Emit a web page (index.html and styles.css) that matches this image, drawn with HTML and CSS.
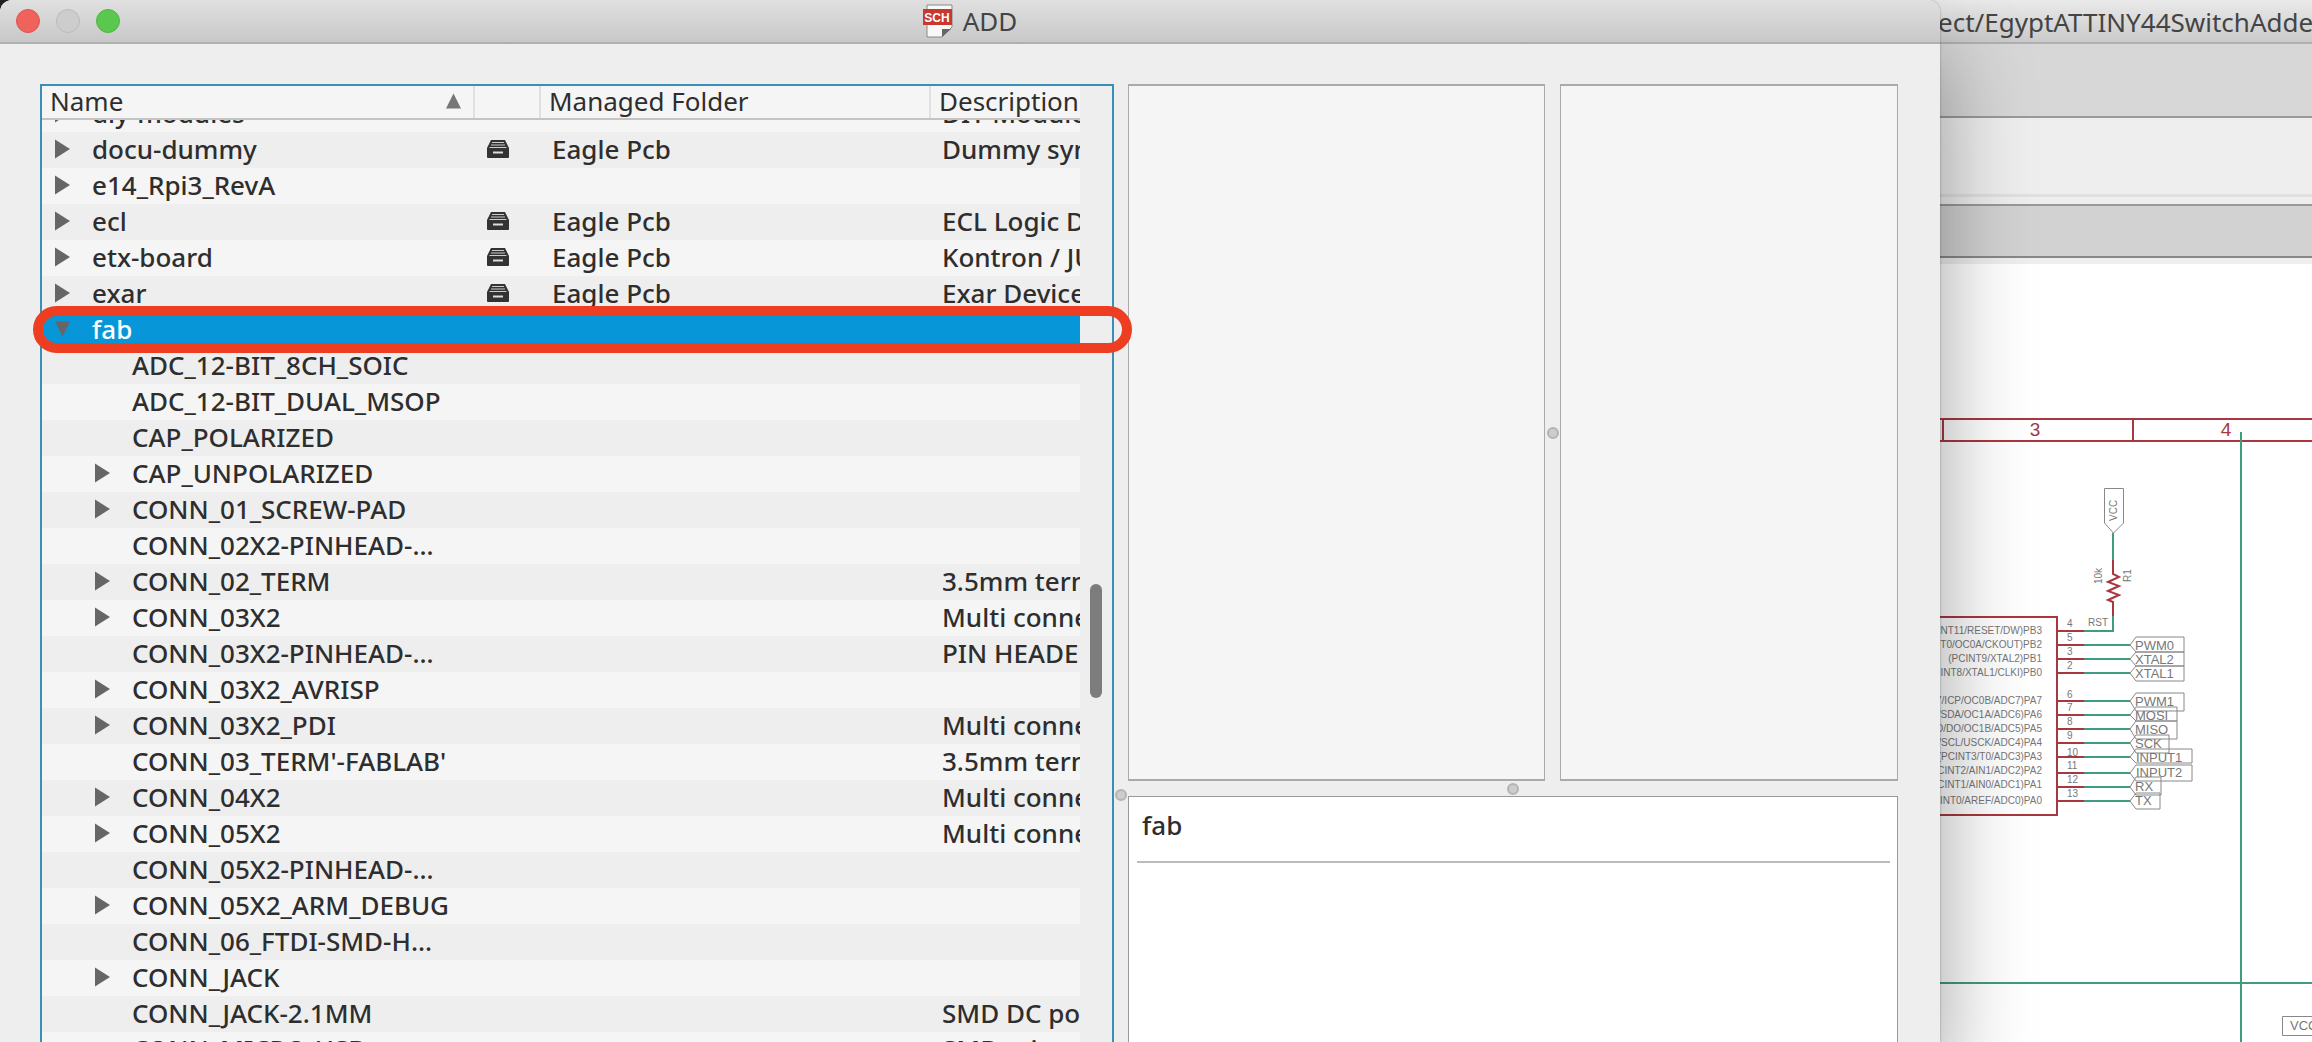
FILE: index.html
```html
<!DOCTYPE html>
<html lang="en">
<head>
<meta charset="utf-8">
<title>ADD</title>
<link rel="stylesheet" href="styles.css">
</head>
<body>
<svg class="sprite" aria-hidden="true">
  <symbol id="right" viewBox="0 0 15 19"><path d="M0 0L15 9.500L0 19Z"/></symbol>
  <symbol id="down" viewBox="0 0 15 15"><path d="M0 0H15L7.500 15Z"/></symbol>
  <symbol id="drawer" viewBox="0 0 22 20">
    <path d="M4 1H18L22 9V18Q22 19 21 19H1Q0 19 0 18V9Z" fill="#333"/>
    <path d="M5 3.500H17M4 6H18M2.500 8.500H19.500" stroke="#ccc" stroke-width="1"/>
    <path d="M6 13.500H16" stroke="#ddd" stroke-width="2"/>
  </symbol>
</svg>
<div class="desktop">
  <section class="dialog" aria-label="ADD">
    <header class="titlebar">
      <div class="lights">
        <button class="light close" aria-label="Close"></button>
        <button class="light minimise" aria-label="Minimise" disabled></button>
        <button class="light zoom" aria-label="Zoom"></button>
      </div>
      <h1 class="title">
        <svg class="sch" viewBox="0 0 30 34" aria-hidden="true">
          <path d="M4 1H29V23L19 33H4Z" fill="#f8f8f8" stroke="#888" stroke-width="1"/>
          <path d="M19 33V25H28Z" fill="#666"/>
          <rect y="5" width="29" height="16" fill="#c8382e"/>
          <text x="14" y="18" text-anchor="middle">SCH</text>
        </svg>
        ADD
      </h1>
    </header>
    <div class="body">
      <div class="tree">
        <table class="list">
          <thead>
            <tr><th>Name<svg class="sort" viewBox="0 0 15 15" aria-hidden="true"><path d="M0 15H15L7.500 0Z"/></svg></th><th></th><th>Managed Folder</th><th>Description</th></tr>
          </thead>
          <tbody>
            <tr><td><button class="twisty" aria-label="Expand"><svg><use href="#right"/></svg></button>diy-modules</td><td></td><td></td><td>DIY Modules</td></tr>
            <tr><td><button class="twisty" aria-label="Expand"><svg><use href="#right"/></svg></button>docu-dummy</td><td><svg class="drawer"><use href="#drawer"/></svg></td><td>Eagle Pcb</td><td>Dummy symbols</td></tr>
            <tr><td><button class="twisty" aria-label="Expand"><svg><use href="#right"/></svg></button>e14_Rpi3_RevA</td><td></td><td></td><td></td></tr>
            <tr><td><button class="twisty" aria-label="Expand"><svg><use href="#right"/></svg></button>ecl</td><td><svg class="drawer"><use href="#drawer"/></svg></td><td>Eagle Pcb</td><td>ECL Logic Devices</td></tr>
            <tr><td><button class="twisty" aria-label="Expand"><svg><use href="#right"/></svg></button>etx-board</td><td><svg class="drawer"><use href="#drawer"/></svg></td><td>Eagle Pcb</td><td>Kontron / JUMPtec</td></tr>
            <tr><td><button class="twisty" aria-label="Expand"><svg><use href="#right"/></svg></button>exar</td><td><svg class="drawer"><use href="#drawer"/></svg></td><td>Eagle Pcb</td><td>Exar Devices</td></tr>
            <tr class="selected"><td><button class="twisty" aria-label="Collapse"><svg><use href="#down"/></svg></button>fab</td><td></td><td></td><td></td></tr>
            <tr class="child"><td>ADC_12-BIT_8CH_SOIC</td><td></td><td></td><td></td></tr>
            <tr class="child"><td>ADC_12-BIT_DUAL_MSOP</td><td></td><td></td><td></td></tr>
            <tr class="child"><td>CAP_POLARIZED</td><td></td><td></td><td></td></tr>
            <tr class="child"><td><button class="twisty" aria-label="Expand"><svg><use href="#right"/></svg></button>CAP_UNPOLARIZED</td><td></td><td></td><td></td></tr>
            <tr class="child"><td><button class="twisty" aria-label="Expand"><svg><use href="#right"/></svg></button>CONN_01_SCREW-PAD</td><td></td><td></td><td></td></tr>
            <tr class="child"><td>CONN_02X2-PINHEAD-…</td><td></td><td></td><td></td></tr>
            <tr class="child"><td><button class="twisty" aria-label="Expand"><svg><use href="#right"/></svg></button>CONN_02_TERM</td><td></td><td></td><td>3.5mm terminal</td></tr>
            <tr class="child"><td><button class="twisty" aria-label="Expand"><svg><use href="#right"/></svg></button>CONN_03X2</td><td></td><td></td><td>Multi connection</td></tr>
            <tr class="child"><td>CONN_03X2-PINHEAD-…</td><td></td><td></td><td>PIN HEADER</td></tr>
            <tr class="child"><td><button class="twisty" aria-label="Expand"><svg><use href="#right"/></svg></button>CONN_03X2_AVRISP</td><td></td><td></td><td></td></tr>
            <tr class="child"><td><button class="twisty" aria-label="Expand"><svg><use href="#right"/></svg></button>CONN_03X2_PDI</td><td></td><td></td><td>Multi connection</td></tr>
            <tr class="child"><td>CONN_03_TERM'-FABLAB'</td><td></td><td></td><td>3.5mm terminal</td></tr>
            <tr class="child"><td><button class="twisty" aria-label="Expand"><svg><use href="#right"/></svg></button>CONN_04X2</td><td></td><td></td><td>Multi connection</td></tr>
            <tr class="child"><td><button class="twisty" aria-label="Expand"><svg><use href="#right"/></svg></button>CONN_05X2</td><td></td><td></td><td>Multi connection</td></tr>
            <tr class="child"><td>CONN_05X2-PINHEAD-…</td><td></td><td></td><td></td></tr>
            <tr class="child"><td><button class="twisty" aria-label="Expand"><svg><use href="#right"/></svg></button>CONN_05X2_ARM_DEBUG</td><td></td><td></td><td></td></tr>
            <tr class="child"><td>CONN_06_FTDI-SMD-H…</td><td></td><td></td><td></td></tr>
            <tr class="child"><td><button class="twisty" aria-label="Expand"><svg><use href="#right"/></svg></button>CONN_JACK</td><td></td><td></td><td></td></tr>
            <tr class="child"><td>CONN_JACK-2.1MM</td><td></td><td></td><td>SMD DC power</td></tr>
            <tr class="child"><td>CONN_MICRO-USB</td><td></td><td></td><td>SMD micro</td></tr>
          </tbody>
        </table>
        <div class="scroll"><div class="thumb"></div></div>
        <div class="ring"></div>
      </div>
      <div class="split split-main"><i class="grip"></i></div>
      <div class="side">
        <div class="previews">
          <div class="preview"></div>
          <div class="split"><i class="grip"></i></div>
          <div class="preview"></div>
        </div>
        <div class="split"><i class="grip"></i></div>
        <div class="info"><p class="info-title">fab</p></div>
      </div>
    </div>
  </section>

  <section class="editor" aria-label="Schematic editor">
    <header class="editor-title">ect/EgyptATTINY44SwitchAdder</header>
    <div class="strip"></div>
    <div class="tools"></div>
    <div class="command"></div>
    <svg class="sheet" viewBox="1940 264 372 778" preserveAspectRatio="xMinYMin slice">
      <g class="frame">
        <path d="M1940 419H2312M1940 441H2312M1943 419V441M2133 419V441"/>
        <text x="2035" y="436">3</text><text x="2226" y="436">4</text>
      </g>
      <path class="net" d="M2241 432V1042M1940 983H2312"/>
      <path class="tag" d="M2104.500 488.500H2123.500V523L2113.500 533L2104.500 523Z"/>
      <path class="net" d="M2113 533V560M2113 616V631H2084"/>
      <path class="part" d="M2113 560V574L2119 577L2108 582L2119 586L2108 591L2119 595L2108 600L2113 602V616"/>
      <g class="small">
        <text transform="translate(2117 521) rotate(-90)">VCC</text>
        <text transform="translate(2102 584) rotate(-90)">10k</text>
        <text transform="translate(2131 582) rotate(-90)">R1</text>
        <text x="2088" y="626">RST</text>
      </g>
      <path class="part" d="M1940 617H2057V815H1940M2057 631H2084M2057 645H2084M2057 659H2084M2057 673H2084M2057 701H2084M2057 715H2084M2057 729H2084M2057 743H2084M2057 757H2084M2057 773H2084M2057 787H2084M2057 801H2084"/>
      <path class="net" d="M2084 645H2130M2084 659H2130M2084 673H2130M2084 701H2130M2084 715H2130M2084 729H2130M2084 743H2130M2084 757H2130M2084 773H2130M2084 787H2130M2084 801H2130"/>
      <g class="small names">
        <text x="2042" y="634">(PCINT11/RESET/DW)PB3</text>
        <text x="2042" y="648">INT0/OC0A/CKOUT)PB2</text>
        <text x="2042" y="662">(PCINT9/XTAL2)PB1</text>
        <text x="2042" y="676">(PCINT8/XTAL1/CLKI)PB0</text>
        <text x="2042" y="704">(PCINT7/ICP/OC0B/ADC7)PA7</text>
        <text x="2042" y="718">MOSI/SDA/OC1A/ADC6)PA6</text>
        <text x="2042" y="732">MISO/DO/OC1B/ADC5)PA5</text>
        <text x="2042" y="746">T1/SCL/USCK/ADC4)PA4</text>
        <text x="2042" y="760">(PCINT3/T0/ADC3)PA3</text>
        <text x="2042" y="774">(PCINT2/AIN1/ADC2)PA2</text>
        <text x="2042" y="788">(PCINT1/AIN0/ADC1)PA1</text>
        <text x="2042" y="804">(PCINT0/AREF/ADC0)PA0</text>
      </g>
      <g class="small">
        <text x="2067" y="627">4</text><text x="2067" y="641">5</text><text x="2067" y="655">3</text><text x="2067" y="669">2</text>
        <text x="2067" y="698">6</text><text x="2067" y="711">7</text><text x="2067" y="725">8</text><text x="2067" y="739">9</text>
        <text x="2067" y="756">10</text><text x="2067" y="769">11</text><text x="2067" y="783">12</text><text x="2067" y="797">13</text>
      </g>
      <path class="tag" d="M2130 645L2136 637H2184V652H2136ZM2130 659L2136 652H2184V666H2136ZM2130 673L2136 666H2184V681H2136ZM2130 701L2136 693H2184V711H2136ZM2130 715L2136 707H2177V721H2136ZM2130 729L2136 721H2177V739H2136ZM2130 743L2136 735H2169V753H2136ZM2130 757L2136 749H2192V763H2136ZM2130 773L2136 765H2192V781H2136ZM2130 787L2136 777H2161V795H2136ZM2130 801L2136 793H2160V809H2136ZM2312 1016.500H2282.500V1035.500H2312"/>
      <g class="small labels">
        <text x="2135" y="650">PWM0</text><text x="2135" y="664">XTAL2</text><text x="2135" y="678">XTAL1</text>
        <text x="2135" y="706">PWM1</text><text x="2135" y="720">MOSI</text><text x="2135" y="734">MISO</text><text x="2135" y="748">SCK</text>
        <text x="2136" y="762">INPUT1</text><text x="2136" y="777">INPUT2</text><text x="2135" y="791">RX</text><text x="2135" y="805">TX</text>
        <text x="2290" y="1030">VCC</text>
      </g>
    </svg>
  </section>
</div>
</body>
</html>
```

FILE: styles.css
```css
* { box-sizing: border-box; }

body {
  margin: 0;
  background: #222;
  color: #2e2e2e;
  font: 26px/36px "Noto Sans", "Open Sans", sans-serif;
}

button {
  padding: 0;
  border: 0;
  background: none;
}

.sprite {
  position: absolute;
  width: 0;
  height: 0;
}

.desktop {
  display: flex;
  height: 100vh;
  overflow: hidden;
}

/* Dialog */
.dialog {
  position: relative;
  z-index: 1;
  display: flex;
  flex: 1;
  flex-direction: column;
  min-width: 0;
  background: #eee;
  border-radius: 12px 12px 0 0;
  box-shadow: 0 0 2px rgba(0, 0, 0, .4), 0 50px 90px rgba(0, 0, 0, .38);
}

.titlebar {
  display: grid;
  grid-template-columns: 1fr auto 1fr;
  align-items: center;
  height: 44px;
  padding: 0 16px;
  background: linear-gradient(#e0e0e0, #c8c8c8);
  border-bottom: 2px solid #b0b0b0;
  border-radius: 12px 12px 0 0;
}

.lights {
  display: flex;
  gap: 16px;
}

.light {
  width: 24px;
  height: 24px;
  border: 1px solid #bbb;
  border-radius: 50%;
}

.close { background: #f0625c; border-color: #dd5650; }
.minimise { background: #cdcdcd; }
.zoom { background: #5ac84e; border-color: #4fb544; }

.title {
  display: flex;
  align-items: center;
  gap: 10px;
  margin: 0;
  color: #444;
  font-size: 26px;
  font-weight: 400;
}

.sch {
  width: 30px;
  height: 34px;
}

.sch text {
  fill: #fff;
  font: bold 12px "Liberation Sans", sans-serif;
}

.body {
  display: grid;
  flex: 1;
  grid-template-columns: minmax(0, 1074fr) 14px minmax(0, 770fr);
  min-height: 0;
  padding: 40px 42px 0 40px;
}

/* Library tree */
.tree {
  position: relative;
  display: flex;
  height: 100%;
  min-height: 0;
  border: 2px solid #3a8fb7;
  border-bottom: 0;
}

.list {
  display: block;
  flex: 1;
  min-width: 0;
  overflow: hidden;
}

.list thead {
  position: relative;
  z-index: 1;
  display: block;
  background: #f5f5f5;
  border-bottom: 2px solid #c4c4c4;
}

.list tbody {
  display: block;
  margin-top: -24px;
}

.list tr {
  display: grid;
  grid-template-columns: 433fr 66fr 390fr 149fr;
}

.list th {
  display: flex;
  align-items: center;
  justify-content: space-between;
  min-width: 0;
  height: 32px;
  padding: 0 12px 2px 8px;
  overflow: hidden;
  border-right: 2px solid #e0e0e0;
  font-weight: 400;
}

.list th:last-child {
  padding-right: 0;
  border: 0;
}

.sort {
  width: 15px;
  height: 18px;
  fill: #777;
}

.list td {
  display: flex;
  align-items: center;
  min-width: 0;
  height: 36px;
  padding: 0 0 2px 11px;
  overflow: hidden;
  font-weight: 500;
  white-space: nowrap;
}

.list td:first-child { padding-left: 50px; }
.list .child td:first-child { padding-left: 90px; }
.list td:nth-child(2) { padding-left: 12px; }

.list tbody tr { background: #f5f5f5; }
.list tbody tr:nth-child(even) { background: #eee; }

.list tbody .selected {
  background: #0797d9;
  color: #fff;
}

.twisty {
  flex: none;
  width: 37px;
  height: 20px;
  margin-left: -37px;
}

.twisty svg {
  display: block;
  width: 15px;
  height: 20px;
  fill: #666;
}

.drawer {
  width: 22px;
  height: 20px;
}

.scroll {
  display: flex;
  flex: none;
  flex-direction: column;
  align-items: center;
  width: 32px;
  padding-top: 498px;
}

.thumb {
  width: 12px;
  height: 114px;
  background: #7c7c7c;
  border-radius: 6px;
}

/* Highlight drawn over the selected row */
.ring {
  position: absolute;
  top: 220px;
  right: -20px;
  left: -9px;
  height: 47px;
  border: 10px solid #ee3e22;
  border-radius: 24px;
}

/* Right side */
.split {
  display: flex;
  align-items: center;
  justify-content: center;
}

.split-main { align-items: flex-end; }
.split-main .grip { margin-bottom: 241px; }

.grip {
  width: 12px;
  height: 12px;
  background: #ccc;
  border: 2px solid #b4b4b4;
  border-radius: 50%;
}

.side {
  display: grid;
  grid-template-rows: 697fr 15px 246fr;
  min-height: 0;
}

.previews {
  display: grid;
  grid-template-columns: 417fr 15px 338fr;
}

.preview {
  background: #f5f5f5;
  border: 1px solid #aaa;
  border-top: 2px solid #aaa;
  border-bottom: 2px solid #aaa;
}

.info {
  padding: 0 7px 0 8px;
  background: #fff;
  border: 1px solid #999;
  border-bottom: 0;
}

.info-title {
  margin: 0;
  padding: 10px 5px 18px;
  border-bottom: 2px solid #bbb;
  font-weight: 500;
}

/* Editor window behind the dialog */
.editor {
  display: flex;
  flex: none;
  flex-direction: column;
  width: 384px;
  margin-left: -12px;
  background: #fff;
}

.editor-title {
  height: 44px;
  padding-left: 10px;
  overflow: hidden;
  background: linear-gradient(#eaeaea, #cacaca);
  border-bottom: 2px solid #b0b0b0;
  color: #444;
  line-height: 44px;
  white-space: nowrap;
}

.strip {
  height: 74px;
  background: #d7d7d7;
  border-bottom: 2px solid #999;
}

.tools {
  height: 86px;
  background: linear-gradient(#eee 0 76px, #e0e0e0 76px 79px, #eee 79px);
}

.command {
  height: 60px;
  background: #eee;
  border-top: 2px solid #999;
}

.command::before {
  display: block;
  height: 50px;
  background: #d2d2d2;
  border-bottom: 2px solid #888;
  content: "";
}

.sheet {
  flex: 1;
  min-height: 0;
  margin-left: 12px;
}

.frame path, .part { fill: none; stroke: #a8383f; stroke-width: 2; }
.frame text { fill: #a8383f; font: 19px "Liberation Sans", sans-serif; text-anchor: middle; }
.net { fill: none; stroke: #3f9c7f; stroke-width: 2; }
.tag { fill: none; stroke: #888; stroke-width: 1; }
.small text { fill: #777; font: 10px "Liberation Sans", sans-serif; }
.small.names text { text-anchor: end; }
.small.labels text { font-size: 13px; }
```
